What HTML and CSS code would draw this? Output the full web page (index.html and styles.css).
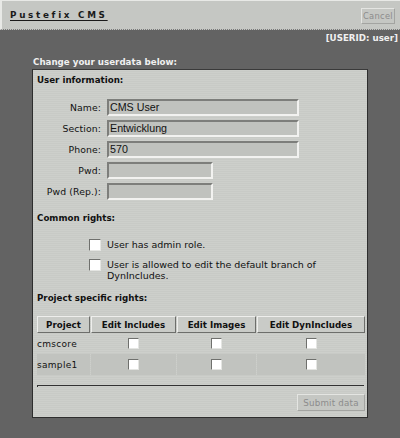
FILE: index.html
```html
<!DOCTYPE html>
<html>
<head>
<meta charset="utf-8">
<link rel="stylesheet" href="styles.css">
</head>
<body>
<div class="topbar">
  <span class="title">Pustefix CMS</span>
  <button class="btn cancel">Cancel</button>
</div>
<div class="userid">[USERID: user]</div>
<div class="main">
  <div class="intro">Change your userdata below:</div>
  <div class="panel">
    <div class="head">User information:</div>
    <div class="form">
      <label>Name:</label><div class="inp wide">CMS User</div>
      <label>Section:</label><div class="inp wide">Entwicklung</div>
      <label>Phone:</label><div class="inp wide">570</div>
      <label>Pwd:</label><div class="inp short"></div>
      <label>Pwd (Rep.):</label><div class="inp short"></div>
    </div>
    <div class="head common">Common rights:</div>
    <div class="rights">
      <div class="right"><span class="cb big"></span><span class="rtext">User has admin role.</span></div>
      <div class="right"><span class="cb big"></span><span class="rtext">User is allowed to edit the default branch of DynIncludes.</span></div>
    </div>
    <div class="head proj">Project specific rights:</div>
    <div class="ptable">
      <div class="th">Project</div><div class="th">Edit Includes</div><div class="th">Edit Images</div><div class="th">Edit DynIncludes</div>
      <div class="td name">cmscore</div><div class="td"><span class="cb"></span></div><div class="td"><span class="cb"></span></div><div class="td"><span class="cb"></span></div>
      <div class="td name alt">sample1</div><div class="td alt"><span class="cb"></span></div><div class="td alt"><span class="cb"></span></div><div class="td alt"><span class="cb"></span></div>
    </div>
    <div class="rule"></div>
    <div class="foot"><button class="btn submit">Submit data</button></div>
  </div>
</div>
</body>
</html>
```
FILE: styles.css
```css
html, body { margin: 0; padding: 0; }
body {
  background: #636363;
  width: 400px;
  height: 438px;
  font-family: "DejaVu Sans", Verdana, sans-serif;
  font-size: 9.5px;
  color: #111;
  overflow: hidden;
}
.topbar {
  height: 28px;
  background: #c5c7c3;
  border-top: 1px solid #e8e9e6;
  border-left: 2px solid #e8e9e6;
  border-bottom: 1px dotted #7a7a7a;
  display: flex;
  align-items: center;
  justify-content: space-between;
  padding: 0 5px 0 8px;
}
.title {
  font-weight: bold;
  font-size: 8.8px;
  letter-spacing: 2.7px;
  text-decoration: underline;
  text-decoration-thickness: 1px;
  text-underline-offset: 2px;
  color: #1a1a1a;
}
.btn {
  font-family: "DejaVu Sans", Verdana, sans-serif;
  color: #8c8c8c;
  background: #c5c7c3;
  border: 1px solid;
  border-color: #e4e5e2 #a3a4a1 #a3a4a1 #e4e5e2;
  padding: 0;
  margin: 0;
}
.cancel {
  height: 16px;
  width: 34px;
  font-size: 8.3px;
  letter-spacing: 0.3px;
  margin-top: 2px;
}
.userid {
  text-align: right;
  color: #f0f0f0;
  font-weight: bold;
  font-size: 8.7px;
  padding: 1px 2px 0 0;
  height: 14px;
  line-height: 14px;
}
.main { padding: 0 0 0 32px; }
.intro {
  color: #f0f0f0;
  font-weight: bold;
  font-size: 8.7px;
  padding: 10px 0 0 1px;
  height: 14px;
  line-height: 14px;
}
.panel {
  width: 328px;
  height: 347px;
  border: 1px solid #2e2e2e;
  border-top-color: #3a3a3a;
  background: repeating-linear-gradient(0deg, #cdcfcb 0 1px, #c8cac6 1px 2px);
  padding: 0 2px 0 4px;
}
.head {
  font-weight: bold;
  font-size: 8.7px;
  padding: 3px 0 0 0;
  height: 14px;
  line-height: 14px;
}
.form {
  display: grid;
  grid-template-columns: 64px auto;
  column-gap: 6px;
  row-gap: 4px;
  margin-top: 12px;
  align-items: center;
}
.form label {
  text-align: right;
  font-size: 9.3px;
  letter-spacing: 0.1px;
}
.inp {
  height: 13px;
  background: #c0c2be;
  border: 2px solid;
  border-color: #7d7e7b #f2f2f0 #f2f2f0 #7d7e7b;
  font-family: "Liberation Sans", Arial, sans-serif;
  font-size: 10.7px;
  line-height: 13px;
  padding-left: 1px;
  color: #111;
}
.wide { width: 187px; }
.short { width: 101px; }
.common { margin-top: 8px; }
.rights {
  padding: 14px 0 0 52px;
  display: flex;
  flex-direction: column;
  gap: 8px;
}
.right {
  display: flex;
  gap: 6px;
  align-items: flex-start;
}
.rtext {
  width: 215px;
  line-height: 11px;
}
.cb {
  display: inline-block;
  width: 9px;
  height: 9px;
  background: #fff;
  border: 1px solid;
  border-color: #6f706d #e4e5e2 #e4e5e2 #6f706d;
  flex: none;
}
.cb.big { width: 10px; height: 10px; }
.proj { margin-top: 7px; }
.ptable {
  margin-top: 11px;
  display: grid;
  grid-template-columns: 53px 85px 79px 108px;
  column-gap: 1px;
  grid-auto-rows: 21px;
  grid-template-rows: 17px;
}
.th {
  font-weight: bold;
  font-size: 8.7px;
  background: #c9cbc7;
  border: 1px solid;
  border-color: #eeeeec #6d6e6b #6d6e6b #eeeeec;
  display: flex;
  align-items: center;
  justify-content: center;
}
.td {
  display: flex;
  align-items: center;
  justify-content: center;
}
.td.name {
  justify-content: flex-start;
  font-size: 9px;
  letter-spacing: 0.3px;
}
.td.alt { background: #c1c3bf; }
.rule {
  margin-top: 10px;
  border-top: 1px solid #333;
  border-left: 1px solid #333;
  height: 1px;
  width: 326px;
}
.foot {
  display: flex;
  justify-content: flex-end;
  padding: 7px 0 0 0;
}
.submit {
  height: 17px;
  width: 68px;
  font-size: 8.7px;
  letter-spacing: 0.2px;
}
```
